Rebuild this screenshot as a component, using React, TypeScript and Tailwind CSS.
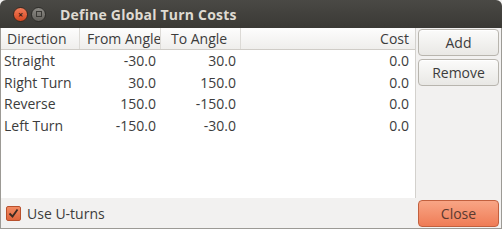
import React from 'react';

const ROWS = [
  { dir: 'Straight', from: '-30.0', to: '30.0', cost: '0.0' },
  { dir: 'Right Turn', from: '30.0', to: '150.0', cost: '0.0' },
  { dir: 'Reverse', from: '150.0', to: '-150.0', cost: '0.0' },
  { dir: 'Left Turn', from: '-150.0', to: '-30.0', cost: '0.0' },
];

function SideButton({ label }: { label: string }) {
  return (
    <button className="h-[27px] w-full rounded-[4px] border border-[#b8b5ae] bg-gradient-to-b from-[#fbfbfa] to-[#e9e8e5] text-[#3c3c3c] text-[14px] leading-none shadow-[inset_0_1px_0_#ffffff]">
      {label}
    </button>
  );
}

export default function App() {
  return (
    <div
      className="w-[502px] h-[229px] flex flex-col bg-[#f2f1f0] overflow-hidden"
      style={{ fontFamily: '"Open Sans", "Noto Sans", sans-serif' }}
    >
      {/* Title bar */}
      <div className="h-[28px] shrink-0 flex items-center bg-gradient-to-b from-[#4a4945] to-[#3a3935] rounded-t-[6px]">
        <div className="ml-[13px] w-[15px] h-[15px] rounded-full bg-gradient-to-b from-[#f27d5a] to-[#d5461f] border border-[#3a2a20] flex items-center justify-center">
          <span className="text-[#3a1a10] text-[9px] leading-none font-bold">×</span>
        </div>
        <div className="ml-[3px] w-[15px] h-[15px] rounded-full bg-gradient-to-b from-[#8c8a85] to-[#64625d] border border-[#2e2d2a] flex items-center justify-center">
          <div className="w-[6px] h-[6px] border border-[#3a3935]" />
        </div>
        <span className="ml-[14px] text-[#dfdbd2] text-[14px] font-bold tracking-[0.2px]">Define Global Turn Costs</span>
      </div>

      <div className="flex-1 flex border-l border-[#9c9a95] border-r border-b">
        {/* Left: table + checkbox */}
        <div className="flex-1 flex flex-col">
          <div className="h-[170px] bg-white border-r border-[#d3d1cd] flex flex-col">
            <div className="h-[22px] flex items-center text-[14px] text-[#3c3c3c] bg-gradient-to-b from-[#fdfdfd] to-[#efeeec] border-b border-[#cfccc7]">
              <div className="w-[79px] pl-[6px] border-r border-[#dcdad6] h-full flex items-center">Direction</div>
              <div className="w-[81px] pl-[7px] border-r border-[#dcdad6] h-full flex items-center overflow-hidden whitespace-nowrap">From Angle</div>
              <div className="w-[80px] pl-[10px] border-r border-[#dcdad6] h-full flex items-center">To Angle</div>
              <div className="flex-1 pr-[6px] text-right">Cost</div>
            </div>
            {ROWS.map((r) => (
              <div key={r.dir} className="h-[21.5px] flex items-center text-[14px] text-[#3c3c3c]">
                <div className="w-[79px] pl-[3px]">{r.dir}</div>
                <div className="w-[76px] text-right">{r.from}</div>
                <div className="w-[80px] text-right">{r.to}</div>
                <div className="flex-1 pr-[6px] text-right">{r.cost}</div>
              </div>
            ))}
          </div>
          <div className="flex-1 flex items-center pl-[5px] gap-[6px]">
            <div className="w-[15px] h-[15px] rounded-[2px] bg-gradient-to-b from-[#f28a62] to-[#e0653c] border border-[#b8502c] flex items-center justify-center">
              <svg width="11" height="11" viewBox="0 0 11 11">
                <path d="M1.5 5.5 L4.5 8.5 L9.5 1.5" fill="none" stroke="#3c2a22" strokeWidth="1.8" />
              </svg>
            </div>
            <span className="text-[14px] text-[#3c3c3c]">Use U-turns</span>
          </div>
        </div>

        {/* Right: buttons */}
        <div className="w-[85px] flex flex-col px-[2px] pt-[1px] pb-[1px]">
          <div className="flex flex-col gap-[3px]">
            <SideButton label="Add" />
            <SideButton label="Remove" />
          </div>
          <div className="flex-1" />
          <button className="h-[27px] w-full rounded-[4px] border border-[#c2603e] bg-gradient-to-b from-[#f8a585] to-[#ef7c56] text-[#5a3a30] text-[14px] leading-none">
            Close
          </button>
        </div>
      </div>
    </div>
  );
}
